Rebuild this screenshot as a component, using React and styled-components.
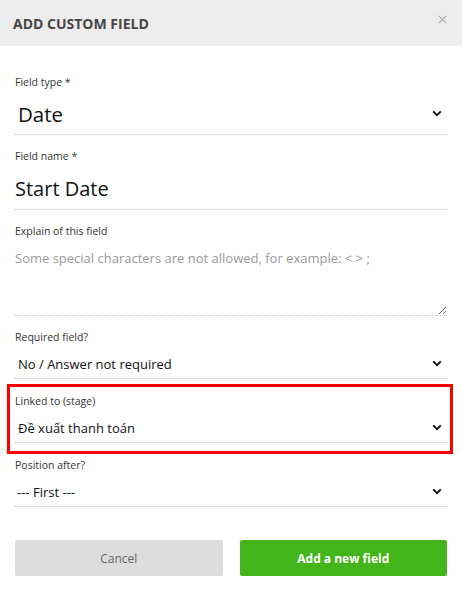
import styled, { createGlobalStyle } from "styled-components";

const GlobalStyle = createGlobalStyle`
  html, body {
    margin: 0;
    padding: 0;
    background: #ffffff;
  }
  body {
    font-family: "Open Sans", "Noto Sans", sans-serif;
    color: #222;
  }
  * {
    box-sizing: border-box;
  }
`;

const fields = [
  {
    label: "Required field?",
    value: "No / Answer not required",
  },
  {
    label: "Linked to (stage)",
    value: "Đề xuất thanh toán",
    highlight: true,
  },
  {
    label: "Position after?",
    value: "--- First ---",
    indent: 2,
  },
];

function Chevron() {
  return (
    <ChevronIcon viewBox="0 0 10 7" aria-hidden="true">
      <path d="M1.2 1.4 L5 5.2 L8.8 1.4" />
    </ChevronIcon>
  );
}

function SelectField({ label, value, large, highlight, indent }) {
  return (
    <Group highlight={highlight}>
      <Label>{label}</Label>
      <SelectWrap large={large}>
        <Select large={large} indent={indent} defaultValue={value}>
          <option>{value}</option>
        </Select>
        <Chevron />
      </SelectWrap>
    </Group>
  );
}

export default function App() {
  return (
    <>
      <GlobalStyle />
      <Modal>
        <Header>
          <Title>ADD CUSTOM FIELD</Title>
          <CloseButton aria-label="Close">
            <svg viewBox="0 0 10 10" width="9" height="9">
              <path d="M1 1 L9 9 M9 1 L1 9" />
            </svg>
          </CloseButton>
        </Header>
        <Form>
          <SelectField label="Field type *" value="Date" large />
          <Group>
            <Label>Field name *</Label>
            <TextInput defaultValue="Start Date" />
          </Group>
          <Group>
            <Label>Explain of this field</Label>
            <TextArea placeholder="Some special characters are not allowed, for example: < > ;" />
          </Group>
          {fields.map((f) => (
            <SelectField key={f.label} {...f} />
          ))}
          <Actions>
            <Button type="button">Cancel</Button>
            <Button type="button" primary>
              Add a new field
            </Button>
          </Actions>
        </Form>
      </Modal>
    </>
  );
}

const Modal = styled.div`
  width: 462px;
  min-height: 596px;
  background: #fff;
`;

const Header = styled.header`
  height: 46px;
  background: #ededed;
  display: flex;
  align-items: center;
  justify-content: space-between;
  padding: 0 14px 0 13px;
`;

const Title = styled.h1`
  margin: 0;
  font-size: 14px;
  font-weight: 700;
  color: #454545;
`;

const CloseButton = styled.button`
  border: 0;
  background: none;
  padding: 0;
  margin-top: -7px;
  width: 12px;
  height: 12px;
  display: flex;
  align-items: center;
  justify-content: center;
  svg path {
    stroke: #a9a9a9;
    stroke-width: 1.2;
    fill: none;
  }
`;

const Form = styled.form`
  padding: 15px 15px 20px;
`;

const Group = styled.div`
  margin-top: 13px;
  ${({ highlight }) =>
    highlight &&
    `
    margin: 5px -6px -10px -8px;
    border: 3px solid #ff0000;
    padding: 6px 3px 8px 5px;
  `}
`;

const Label = styled.label`
  display: block;
  font-size: 10.5px;
  line-height: 16px;
  color: #333;
  margin-bottom: 4px;
`;

const SelectWrap = styled.div`
  position: relative;
  border-bottom: 1px dotted #c4c4c4;
  height: ${({ large }) => (large ? "41px" : "30px")};
`;

const Select = styled.select`
  appearance: none;
  -webkit-appearance: none;
  width: 100%;
  height: 100%;
  border: 0;
  background: transparent;
  outline: none;
  margin: 0;
  padding: 0 20px 0 ${({ indent }) => 3 - (indent ? 1 : 0)}px;
  font-family: inherit;
  font-size: ${({ large }) => (large ? "20.5px" : "13px")};
  color: #111;
`;

const ChevronIcon = styled.svg`
  position: absolute;
  right: 5px;
  top: 50%;
  width: 10px;
  height: 7px;
  margin-top: -4px;
  pointer-events: none;
  path {
    fill: none;
    stroke: #111;
    stroke-width: 2;
  }
`;

const TextInput = styled.input`
  display: block;
  width: 100%;
  height: 42px;
  border: 0;
  border-bottom: 1px dotted #c4c4c4;
  outline: none;
  padding: 0;
  font-family: inherit;
  font-size: 20px;
  color: #111;
`;

const TextArea = styled.textarea`
  display: block;
  width: 100%;
  height: 73px;
  border: 0;
  border-bottom: 1px dotted #c4c4c4;
  outline: none;
  padding: 5px 0 0;
  font-family: inherit;
  font-size: 13px;
  line-height: 20px;
  color: #111;
  &::placeholder {
    color: #9a9a9a;
  }
`;

const Actions = styled.div`
  display: grid;
  grid-template-columns: 1fr 1fr;
  gap: 17px;
  margin-top: 33px;
`;

const Button = styled.button`
  height: 36px;
  border: 0;
  border-radius: 2px;
  font-family: inherit;
  font-size: 12px;
  font-weight: ${({ primary }) => (primary ? 700 : 400)};
  background: ${({ primary }) => (primary ? "#43b51a" : "#dddddd")};
  color: ${({ primary }) => (primary ? "#ffffff" : "#666666")};
  cursor: pointer;
`;
